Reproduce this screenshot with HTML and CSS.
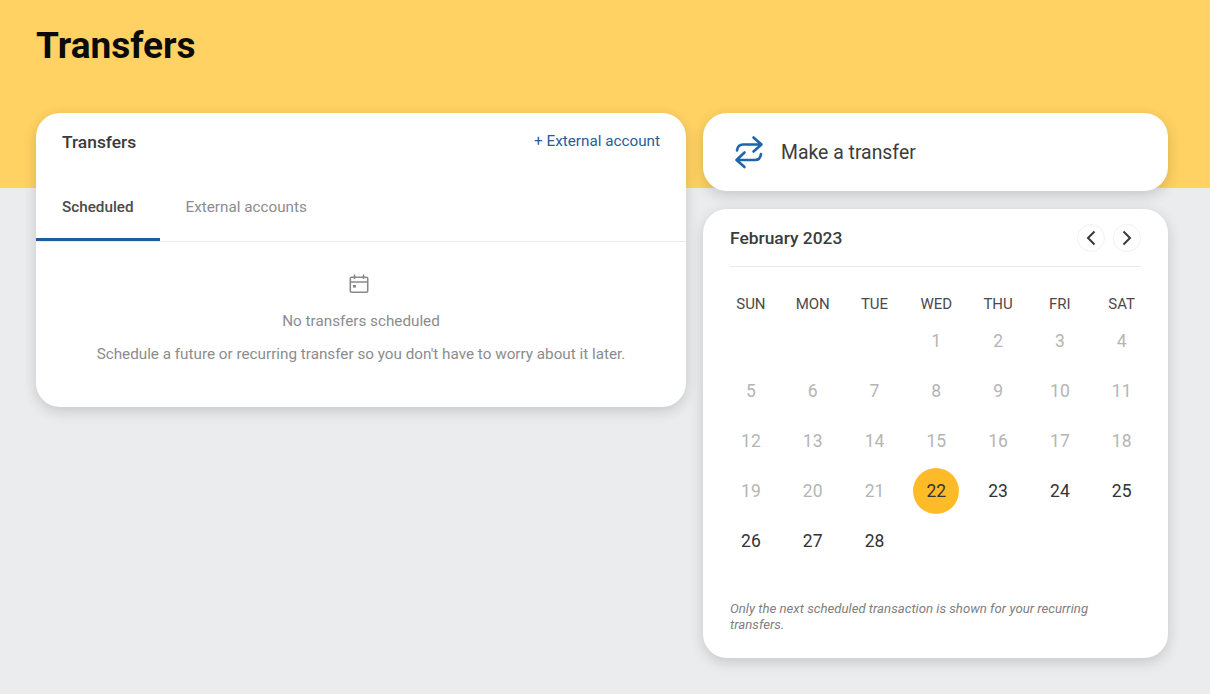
FILE: index.html
```html
<!DOCTYPE html>
<html lang="en">
<head>
<meta charset="utf-8">
<title>Transfers</title>
<link rel="stylesheet" href="styles.css">
</head>
<body>
<header class="banner"><h1>Transfers</h1></header>
<main class="layout">
  <section class="card transfers">
    <div class="transfers-head">
      <h2>Transfers</h2>
      <a class="add-link" href="#">+ External account</a>
    </div>
    <div class="tabs">
      <div class="tab active">Scheduled</div>
      <div class="tab">External accounts</div>
    </div>
    <div class="empty">
      <svg class="empty-icon" width="22" height="22" viewBox="0 0 22 22" fill="none" stroke="#8a8a8a" stroke-width="1.600">
        <rect x="2.300" y="4.300" width="17.400" height="15" rx="1.200"/>
        <path d="M2.300 9h17.400M6.500 1.500v4.500M15.500 1.500v4.500"/>
        <rect x="5" y="12" width="3" height="2.600" fill="#8a8a8a" stroke="none"/>
      </svg>
      <p class="empty-title">No transfers scheduled</p>
      <p class="empty-text">Schedule a future or recurring transfer so you don't have to worry about it later.</p>
    </div>
  </section>
  <aside class="side">
    <div class="card make">
      <svg width="30" height="34" viewBox="0 0 30 34" fill="none" stroke="#1f65a8" stroke-width="2.600" stroke-linecap="round" stroke-linejoin="round">
        <path d="M19.500 2.500 27.500 9.500l-8 7M27.500 9.500H9C5.500 9.500 3.500 11.500 3 15.500"/>
        <path d="M10.500 17.500 2.500 25l8 7M2.500 25H21C24.500 25 26.500 23 27 19"/>
      </svg>
      <span>Make a transfer</span>
    </div>
    <section class="card calendar">
      <div class="cal-head">
        <h2>February 2023</h2>
        <div class="cal-nav">
          <button class="nav-btn" aria-label="Previous"><svg width="12" height="16" viewBox="0 0 12 16" fill="none" stroke="#3a3a3a" stroke-width="2"><path d="M9.500 1.500 3 8l6.500 6.500"/></svg></button>
          <button class="nav-btn" aria-label="Next"><svg width="12" height="16" viewBox="0 0 12 16" fill="none" stroke="#3a3a3a" stroke-width="2"><path d="M2.500 1.500 9 8l-6.500 6.500"/></svg></button>
        </div>
      </div>
      <div class="cal-grid">
        <div class="dow">SUN</div><div class="dow">MON</div><div class="dow">TUE</div><div class="dow">WED</div><div class="dow">THU</div><div class="dow">FRI</div><div class="dow">SAT</div>
        <div class="day"></div><div class="day"></div><div class="day"></div>
        <div class="day past">1</div><div class="day past">2</div><div class="day past">3</div><div class="day past">4</div>
        <div class="day past">5</div><div class="day past">6</div><div class="day past">7</div><div class="day past">8</div><div class="day past">9</div><div class="day past">10</div><div class="day past">11</div>
        <div class="day past">12</div><div class="day past">13</div><div class="day past">14</div><div class="day past">15</div><div class="day past">16</div><div class="day past">17</div><div class="day past">18</div>
        <div class="day past">19</div><div class="day past">20</div><div class="day past">21</div><div class="day"><span class="today">22</span></div><div class="day">23</div><div class="day">24</div><div class="day">25</div>
        <div class="day">26</div><div class="day">27</div><div class="day">28</div>
      </div>
      <p class="note">Only the next scheduled transaction is shown for your recurring transfers.</p>
    </section>
  </aside>
</main>
</body>
</html>
```

FILE: styles.css
```css
* { box-sizing: border-box; }
html, body { margin: 0; height: 100%; }
body {
  height: 694px;
  overflow: hidden;
  background: #ebecee;
  font-family: Roboto, "Liberation Sans", sans-serif;
  color: #2e2e2e;
}
.banner {
  height: 188px;
  margin-bottom: -75px;
  padding: 25px 36px 0;
  background: #ffd263;
}
h1 {
  margin: 0;
  font-size: 37px;
  line-height: 42px;
  font-weight: 700;
  color: #0b0b0b;
}
h2 {
  margin: 0;
  font-size: 17.400px;
  line-height: 20px;
  font-weight: 500;
  color: #3a3a3a;
}
.layout {
  display: flex;
  align-items: flex-start;
  gap: 17px;
  padding: 0 41px 0 36px;
}
.card {
  background: #fff;
  border-radius: 24px;
  box-shadow: 0 4px 14px rgba(0, 0, 0, 0.16);
}
.transfers { width: 650px; height: 294px; }
.transfers-head {
  display: flex;
  justify-content: space-between;
  height: 62px;
  padding: 19px 26px 0;
}
.add-link {
  font-size: 15.250px;
  line-height: 18px;
  color: #2a5c9a;
  text-decoration: none;
}
.tabs {
  display: flex;
  height: 67px;
  border-bottom: 1px solid #ebebeb;
}
.tab {
  padding: 23px 26px 0;
  font-size: 15.250px;
  line-height: 18px;
  color: #8c8c8c;
}
.tab.active {
  height: 66px;
  font-weight: 500;
  color: #4a4a4a;
  border-bottom: 3px solid #1f5c9e;
}
.empty {
  display: flex;
  flex-direction: column;
  align-items: center;
  padding-top: 31px;
}
.empty-icon { display: block; margin-right: 4px; }
.empty-title, .empty-text {
  margin: 0;
  font-size: 15.250px;
  line-height: 18px;
  color: #8c8c8c;
}
.empty-title { margin-top: 17px; }
.empty-text { margin-top: 15px; }
.side {
  display: flex;
  flex-direction: column;
  gap: 18px;
  width: 465px;
}
.make {
  display: flex;
  align-items: center;
  gap: 17px;
  height: 78px;
  padding: 0 31px;
  font-size: 19.400px;
  color: #3c3c3c;
}
.calendar {
  height: 449px;
  padding: 0 27px;
}
.cal-head {
  display: flex;
  justify-content: space-between;
  align-items: center;
  height: 58px;
  border-bottom: 1px solid #ebebeb;
}
.cal-nav { display: flex; gap: 8px; }
.nav-btn {
  display: flex;
  align-items: center;
  justify-content: center;
  width: 28px;
  height: 28px;
  padding: 0;
  background: #fff;
  border: 1px solid #f1f1f1;
  border-radius: 50%;
}
.cal-grid {
  display: grid;
  grid-template-columns: repeat(7, 61.800px);
  grid-template-rows: 49px;
  grid-auto-rows: 50px;
  margin-left: -10px;
}
.dow {
  padding-top: 28px;
  text-align: center;
  font-size: 15px;
  line-height: 18px;
  color: #4a4a4a;
}
.day {
  display: flex;
  align-items: center;
  justify-content: center;
  font-size: 17.500px;
  color: #333;
}
.day.past { color: #b5b5b5; }
.today {
  display: flex;
  align-items: center;
  justify-content: center;
  width: 46px;
  height: 46px;
  border-radius: 50%;
  background: #fdbc27;
}
.note {
  max-width: 380px;
  margin: 35px 0 0;
  font-size: 13.200px;
  line-height: 15.500px;
  font-style: italic;
  color: #808080;
}
```
